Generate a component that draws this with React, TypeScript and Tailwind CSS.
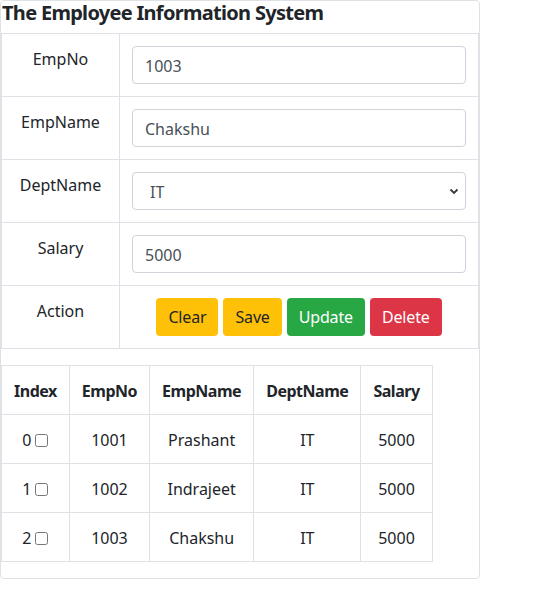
import { useState } from 'react'

const employees = [
  { empNo: 1001, empName: 'Prashant', deptName: 'IT', salary: 5000 },
  { empNo: 1002, empName: 'Indrajeet', deptName: 'IT', salary: 5000 },
  { empNo: 1003, empName: 'Chakshu', deptName: 'IT', salary: 5000 },
]

const cell = 'border border-[#dee2e6] px-3 pt-[13px] pb-[11px] align-top'
const field = 'border border-[#dee2e6] p-3 align-top'
const input =
  'w-full h-[38px] px-3 pt-[2px] border border-[#ced4da] rounded-[4px] bg-white text-[#495057] text-base outline-none'
const btn = 'h-[38px] px-3 rounded-[4px] tracking-[-0.01em]'

export default function App() {
  const [empNo, setEmpNo] = useState('1003')
  const [empName, setEmpName] = useState('Chakshu')
  const [dept, setDept] = useState('IT')
  const [salary, setSalary] = useState('5000')

  return (
    <div
      className="text-[#212529] text-base leading-6 bg-white"
      style={{ fontFamily: '"Segoe UI", "Noto Sans", sans-serif' }}
    >
      <div className="w-[480px] border border-[#dee2e6] rounded-[4px] pb-4">
        <h5 className="text-[20px] leading-6 font-bold tracking-[-0.035em] mb-2 pl-px">
          The Employee Information System
        </h5>

        <table className="w-full border-collapse mb-4">
          <tbody>
            <tr>
              <td className={`${cell} w-[118px] text-center`}>EmpNo</td>
              <td className={field}>
                <input className={input} value={empNo} onChange={e => setEmpNo(e.target.value)} />
              </td>
            </tr>
            <tr>
              <td className={`${cell} text-center`}>EmpName</td>
              <td className={field}>
                <input className={input} value={empName} onChange={e => setEmpName(e.target.value)} />
              </td>
            </tr>
            <tr>
              <td className={`${cell} text-center`}>DeptName</td>
              <td className={field}>
                <div className="relative">
                  <select
                    className={`${input} appearance-none pl-[17px]`}
                    value={dept}
                    onChange={e => setDept(e.target.value)}
                  >
                    <option>IT</option>
                    <option>HR</option>
                    <option>Sales</option>
                  </select>
                  <svg
                    className="absolute right-[7px] top-[16px] pointer-events-none"
                    width="10"
                    height="7"
                    viewBox="0 0 10 7"
                  >
                    <path d="M1.5 1.5 L5 5 L8.5 1.5" fill="none" stroke="#343a40" strokeWidth="1.8" />
                  </svg>
                </div>
              </td>
            </tr>
            <tr>
              <td className={`${cell} text-center`}>Salary</td>
              <td className={field}>
                <input className={input} value={salary} onChange={e => setSalary(e.target.value)} />
              </td>
            </tr>
            <tr>
              <td className={`${cell} text-center`}>Action</td>
              <td className={field}>
                <div className="flex justify-center gap-[5px]">
                  <button className={`${btn} bg-[#ffc107] text-[#212529]`}>Clear</button>
                  <button className={`${btn} bg-[#ffc107] text-[#212529]`}>Save</button>
                  <button className={`${btn} bg-[#28a745] text-white`}>Update</button>
                  <button className={`${btn} bg-[#dc3545] text-white`}>Delete</button>
                </div>
              </td>
            </tr>
          </tbody>
        </table>

        <table className="border-collapse">
          <thead>
            <tr>
              {['Index', 'EmpNo', 'EmpName', 'DeptName', 'Salary'].map(h => (
                <th key={h} className={`${cell} font-bold text-center tracking-[-0.03em]`}>
                  {h}
                </th>
              ))}
            </tr>
          </thead>
          <tbody>
            {employees.map((e, i) => (
              <tr key={e.empNo}>
                <td className={`${cell} text-center`}>
                  <span className="inline-flex items-center gap-1">
                    {i}
                    <input type="checkbox" className="w-[13px] h-[13px]" />
                  </span>
                </td>
                <td className={`${cell} text-center`}>{e.empNo}</td>
                <td className={`${cell} text-center`}>{e.empName}</td>
                <td className={`${cell} text-center`}>{e.deptName}</td>
                <td className={`${cell} text-center`}>{e.salary}</td>
              </tr>
            ))}
          </tbody>
        </table>
      </div>
    </div>
  )
}
